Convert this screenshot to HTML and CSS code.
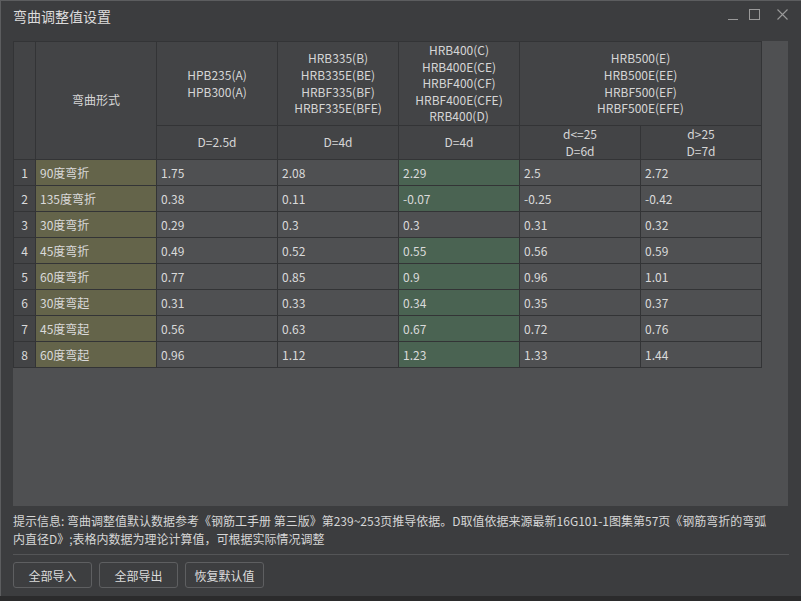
FILE: index.html
```html
<!DOCTYPE html>
<html lang="zh-CN">
<head>
<meta charset="utf-8">
<title>弯曲调整值设置</title>
<link rel="stylesheet" href="styles.css">
</head>
<body>
<div class="window">
  <div class="titlebar">
    <span class="title">弯曲调整值设置</span>
    <div class="controls">
      <svg class="ctl ctl-min" width="10" height="12" viewBox="0 0 10 12"><line x1="0" y1="10.5" x2="10" y2="10.5" stroke="#9a9a9a" stroke-width="1"/></svg>
      <svg class="ctl ctl-max" width="11" height="12" viewBox="0 0 11 12"><rect x="0.5" y="0.5" width="10" height="10" fill="none" stroke="#9a9a9a" stroke-width="1"/></svg>
      <svg class="ctl ctl-close" width="11" height="12" viewBox="0 0 11 12"><path d="M0.5 0.5L10.5 10.5M10.5 0.5L0.5 10.5" stroke="#9a9a9a" stroke-width="1.1"/></svg>
    </div>
  </div>
  <div class="gridbox">
    <table class="grid">
      <colgroup>
        <col class="c-idx"><col class="c-name"><col class="c-v"><col class="c-v"><col class="c-v"><col class="c-v"><col class="c-v">
      </colgroup>
      <thead>
        <tr class="h1">
          <th rowspan="2"></th>
          <th rowspan="2">弯曲形式</th>
          <th>HPB235(A)<br>HPB300(A)</th>
          <th>HRB335(B)<br>HRB335E(BE)<br>HRBF335(BF)<br>HRBF335E(BFE)</th>
          <th>HRB400(C)<br>HRB400E(CE)<br>HRBF400(CF)<br>HRBF400E(CFE)<br>RRB400(D)</th>
          <th colspan="2">HRB500(E)<br>HRB500E(EE)<br>HRBF500(EF)<br>HRBF500E(EFE)</th>
        </tr>
        <tr class="h2">
          <th>D=2.5d</th>
          <th>D=4d</th>
          <th>D=4d</th>
          <th>d&lt;=25<br>D=6d</th>
          <th>d&gt;25<br>D=7d</th>
        </tr>
      </thead>
      <tbody>
        <tr><td class="idx">1</td><td class="name">90度弯折</td><td>1.75</td><td>2.08</td><td class="hl">2.29</td><td>2.5</td><td>2.72</td></tr>
        <tr><td class="idx">2</td><td class="name">135度弯折</td><td>0.38</td><td>0.11</td><td class="hl">-0.07</td><td>-0.25</td><td>-0.42</td></tr>
        <tr><td class="idx">3</td><td class="name">30度弯折</td><td>0.29</td><td>0.3</td><td>0.3</td><td>0.31</td><td>0.32</td></tr>
        <tr><td class="idx">4</td><td class="name">45度弯折</td><td>0.49</td><td>0.52</td><td class="hl">0.55</td><td>0.56</td><td>0.59</td></tr>
        <tr><td class="idx">5</td><td class="name">60度弯折</td><td>0.77</td><td>0.85</td><td class="hl">0.9</td><td>0.96</td><td>1.01</td></tr>
        <tr><td class="idx">6</td><td class="name">30度弯起</td><td>0.31</td><td>0.33</td><td class="hl">0.34</td><td>0.35</td><td>0.37</td></tr>
        <tr><td class="idx">7</td><td class="name">45度弯起</td><td>0.56</td><td>0.63</td><td class="hl">0.67</td><td>0.72</td><td>0.76</td></tr>
        <tr><td class="idx">8</td><td class="name">60度弯起</td><td>0.96</td><td>1.12</td><td class="hl">1.23</td><td>1.33</td><td>1.44</td></tr>
      </tbody>
    </table>
  </div>
  <div class="info">
    <div class="line">提示信息: 弯曲调整值默认数据参考《钢筋工手册 第三版》第239~253页推导依据。D取值依据来源最新16G101-1图集第57页《钢筋弯折的弯弧</div>
    <div class="line">内直径D》;表格内数据为理论计算值，可根据实际情况调整</div>
  </div>
  <div class="sep"></div>
  <div class="buttons">
    <button class="btn">全部导入</button>
    <button class="btn">全部导出</button>
    <button class="btn">恢复默认值</button>
  </div>
</div>
</body>
</html>
```
FILE: styles.css
```css
html, body {
  margin: 0;
  padding: 0;
  background: #2b2b2c;
}
body {
  width: 801px;
  height: 601px;
  overflow: hidden;
  font-family: "Noto Sans CJK SC", "Microsoft YaHei", sans-serif;
  color: #d6d6d6;
  font-size: 12px;
}
.window {
  box-sizing: border-box;
  width: 801px;
  height: 596px;
  background: #3c3d3f;
  border-top: 1px solid #5c5d5f;
  border-left: 1px solid #5c5d5f;
  display: flex;
  flex-direction: column;
}
.titlebar {
  height: 40px;
  display: flex;
  align-items: flex-start;
  justify-content: space-between;
  padding-left: 12px;
  padding-right: 13px;
}
.title {
  font-size: 14px;
  line-height: 16px;
  margin-top: 7px;
  color: #dcdcdc;
}
.controls {
  display: flex;
  margin-top: 8px;
}
.ctl-min { margin-right: 11px; }
.ctl-max { margin-right: 17px; }
.gridbox {
  margin-left: 12px;
  width: 775px;
  height: 465px;
  background: #4f5052;
}
.grid {
  border-collapse: collapse;
  table-layout: fixed;
  width: 749px;
}
.c-idx { width: 22px; }
.c-name { width: 121px; }
.c-v { width: 121px; }
.grid th, .grid td {
  border: 1px solid #333436;
  padding: 0;
  font-weight: normal;
  overflow: hidden;
  white-space: nowrap;
}
.grid th {
  background: #434446;
  color: #d6d6d6;
  text-align: center;
  line-height: 16.6px;
}
.grid tr.h1 th {
  height: 83px;
}
.grid tr.h2 th {
  height: 33px;
}
.grid tbody tr td {
  height: 25px;
  background: #4f5052;
  padding-left: 4px;
  color: #dadada;
}
.grid tbody td.idx {
  background: #434446;
  padding: 0;
  text-align: center;
}
.grid tbody td.name {
  background: #64644a;
  padding-left: 4px;
}
.grid tbody td.hl {
  background: #4a6352;
}
.info {
  margin-top: 6px;
  padding-left: 12px;
  line-height: 18px;
  font-size: 12px;
  color: #d6d6d6;
}
.info .line {
  white-space: nowrap;
}
.sep {
  margin: 6px 12px 0 12px;
  height: 1px;
  background: #545557;
}
.buttons {
  display: flex;
  gap: 7px;
  margin-top: 7px;
  padding-left: 12px;
}
.btn {
  width: 79px;
  height: 26px;
  background: #3d3e40;
  border: 1px solid #5e5f61;
  border-radius: 3px;
  color: #dcdcdc;
  font-family: "Noto Sans CJK SC", sans-serif;
  font-size: 12px;
  padding: 0;
}
```
